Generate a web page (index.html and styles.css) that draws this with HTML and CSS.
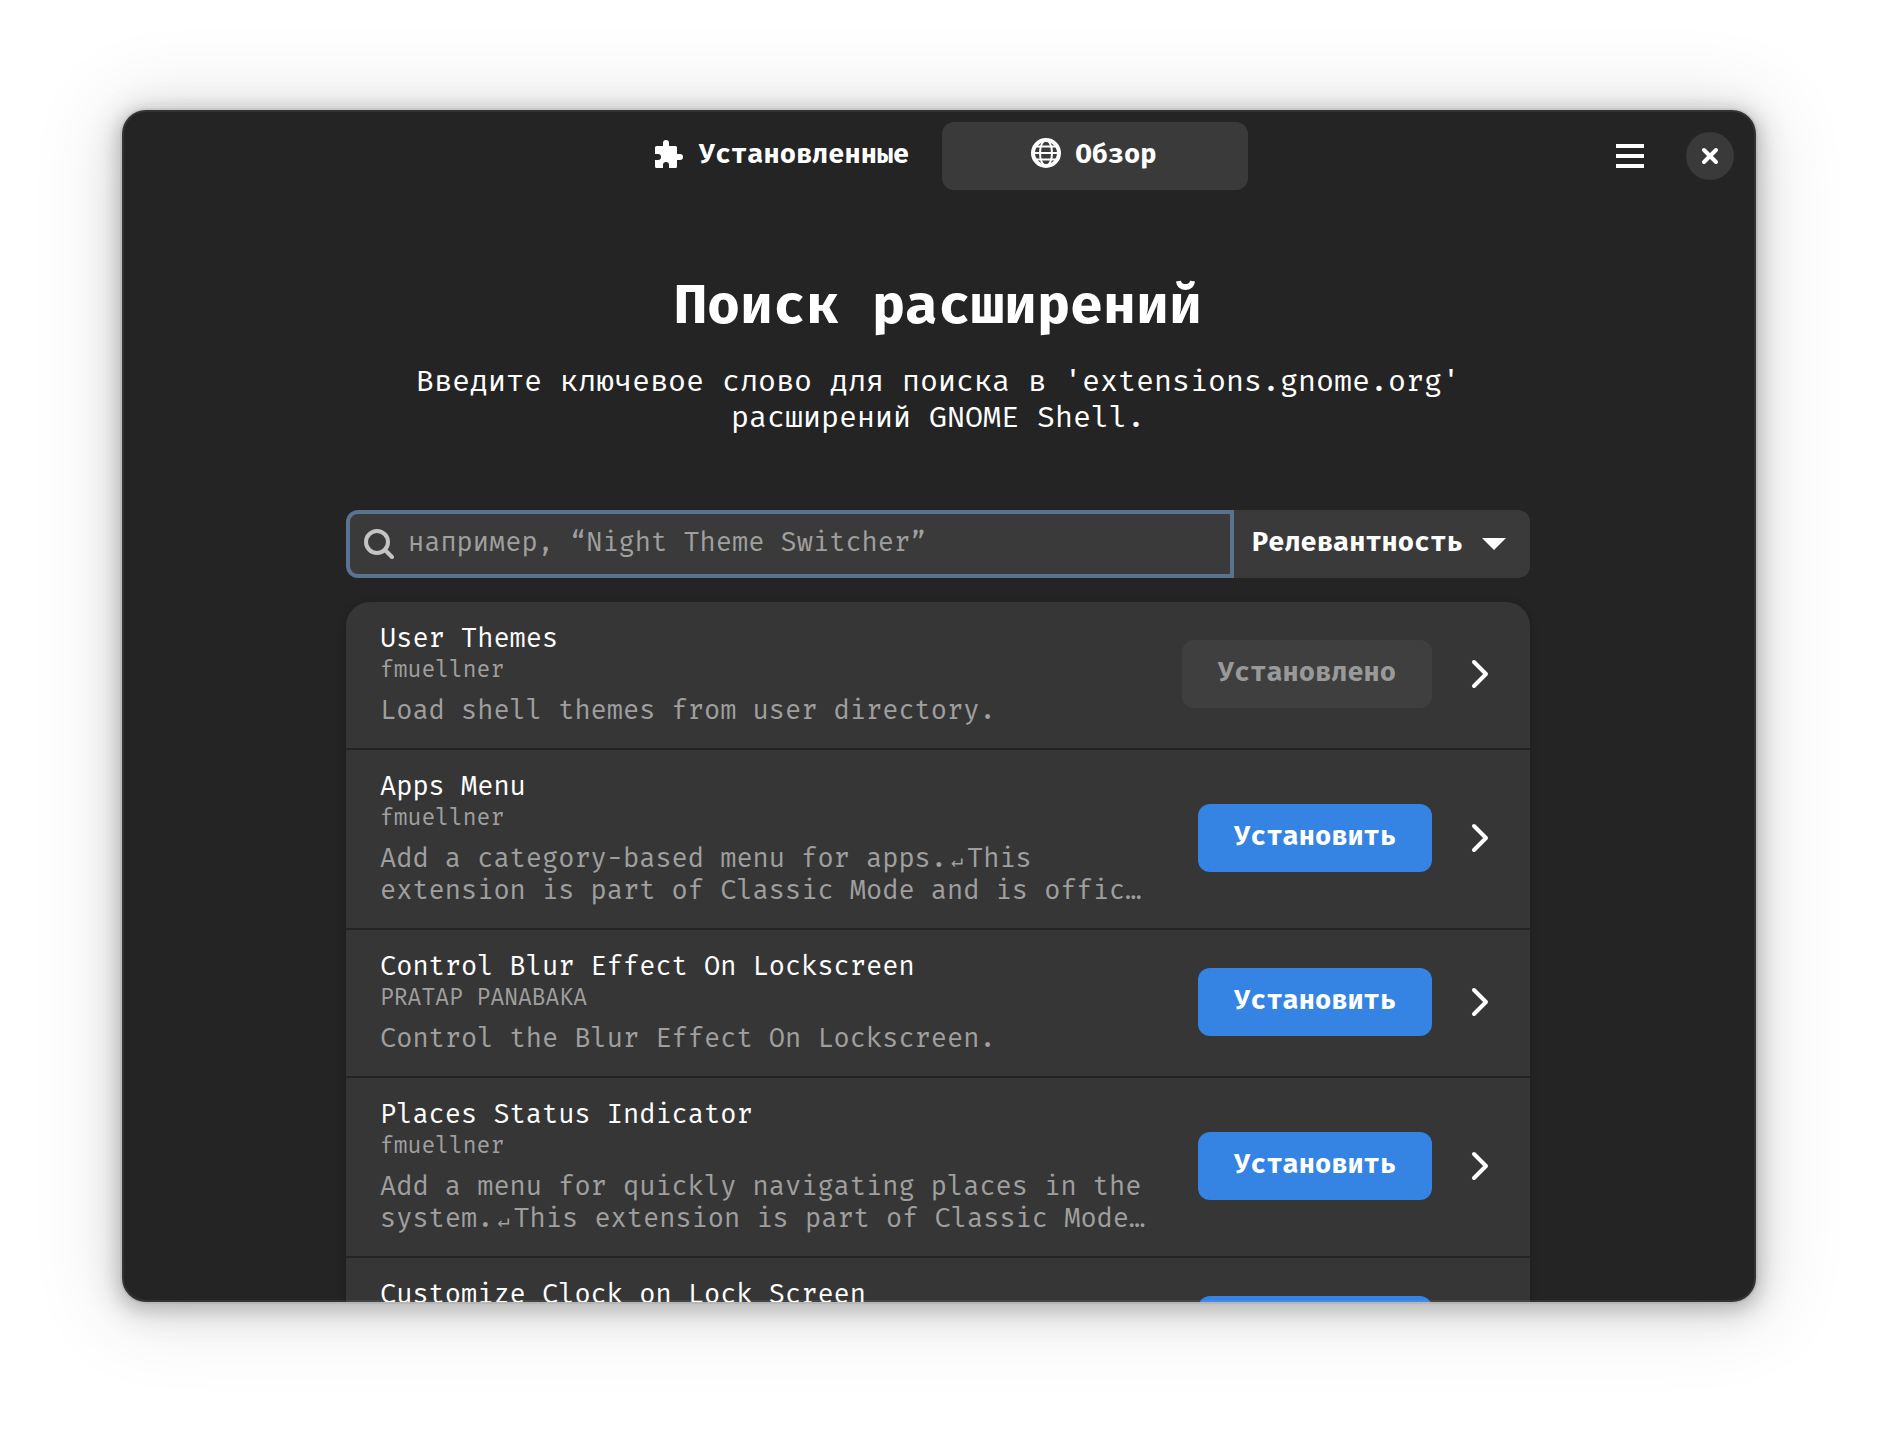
FILE: index.html
```html
<!DOCTYPE html>
<html lang="ru">
<head>
<meta charset="utf-8">
<meta name="viewport" content="width=device-width, initial-scale=1">
<title>Поиск расширений</title>
<link rel="stylesheet" href="styles.css">
</head>
<body>
<svg class="symbols" aria-hidden="true">
  <symbol id="chevron" viewBox="0 0 32 32"><path d="M10 4l12 12-12 12"/></symbol>
</svg>
<div class="window">
  <header class="headerbar">
    <nav class="tabs">
      <button class="tab" type="button">
        <svg class="icon" viewBox="0 0 32 32" aria-hidden="true"><path fill="#fff" d="M2 9.500a1.500 1.500 0 0 1 1.500-1.500H10V5a3 3 0 0 1 6 0v3h6.500a1.500 1.500 0 0 1 1.500 1.500V16h3a3 3 0 0 1 0 6h-3v6.500a1.500 1.500 0 0 1-1.500 1.500H16v-3a3 3 0 0 0-6 0v3H3.500A1.500 1.500 0 0 1 2 28.500V22h3a3 3 0 0 0 0-6H2z"/></svg>
        <span>Установленные</span>
      </button>
      <button class="tab tab-active" type="button">
        <svg class="icon" viewBox="0 0 32 32" aria-hidden="true"><g fill="none" stroke="#fff"><circle cx="16" cy="15" r="13" stroke-width="4"/><ellipse cx="16" cy="15" rx="6" ry="13" stroke-width="2"/><path stroke-width="2" d="M5 8.500h22M3 15h26M5 21.500h22"/></g></svg>
        <span>Обзор</span>
      </button>
    </nav>
    <div class="controls">
      <button class="menu-button" type="button" aria-label="Меню">
        <svg class="icon" viewBox="0 0 32 32" aria-hidden="true"><path fill="#fff" d="M2 4h28v4H2zM2 14h28v4H2zM2 24h28v4H2z"/></svg>
      </button>
      <button class="close-button" type="button" aria-label="Закрыть">
        <svg class="icon" viewBox="0 0 32 32" aria-hidden="true"><path fill="none" stroke="#fff" stroke-width="4" stroke-linecap="round" d="M10 10l12 12M22 10L10 22"/></svg>
      </button>
    </div>
  </header>
  <main class="content">
    <div class="column">
      <h1 class="title">Поиск расширений</h1>
      <p class="subtitle">Введите ключевое слово для поиска в 'extensions.gnome.org' расширений GNOME Shell.</p>
      <form class="search">
        <label class="search-field">
          <svg class="icon" viewBox="0 0 32 32" aria-hidden="true"><g fill="none" stroke="#c4c4c4" stroke-width="4" stroke-linecap="round"><circle cx="15" cy="14" r="11"/><path d="M23 22l7 7"/></g></svg>
          <input class="search-input" type="text" aria-label="Поиск расширений" placeholder="например, “Night Theme Switcher”">
        </label>
        <div class="sort">
          <select class="sort-select" aria-label="Сортировка"><option>Релевантность</option></select>
          <svg class="sort-arrow" viewBox="0 0 24 12" aria-hidden="true"><path fill="#fff" d="M0 0h24L12 12z"/></svg>
        </div>
      </form>
      <ul class="list">
        <li class="row">
          <div class="info">
            <h2 class="name">User Themes</h2>
            <p class="author">fmuellner</p>
            <p class="desc">Load shell themes from user directory.</p>
          </div>
          <button class="install" type="button" disabled>Установлено</button>
          <button class="more" type="button" aria-label="Подробнее"><svg class="icon chevron" aria-hidden="true"><use href="#chevron"/></svg></button>
        </li>
        <li class="row">
          <div class="info">
            <h2 class="name">Apps Menu</h2>
            <p class="author">fmuellner</p>
            <p class="desc">Add a category-based menu for apps.<span class="return">↵</span>This extension is part of Classic Mode and is offic…</p>
          </div>
          <button class="install" type="button">Установить</button>
          <button class="more" type="button" aria-label="Подробнее"><svg class="icon chevron" aria-hidden="true"><use href="#chevron"/></svg></button>
        </li>
        <li class="row">
          <div class="info">
            <h2 class="name">Control Blur Effect On Lockscreen</h2>
            <p class="author">PRATAP PANABAKA</p>
            <p class="desc">Control the Blur Effect On Lockscreen.</p>
          </div>
          <button class="install" type="button">Установить</button>
          <button class="more" type="button" aria-label="Подробнее"><svg class="icon chevron" aria-hidden="true"><use href="#chevron"/></svg></button>
        </li>
        <li class="row">
          <div class="info">
            <h2 class="name">Places Status Indicator</h2>
            <p class="author">fmuellner</p>
            <p class="desc">Add a menu for quickly navigating places in the system.<span class="return">↵</span>This extension is part of Classic Mode…</p>
          </div>
          <button class="install" type="button">Установить</button>
          <button class="more" type="button" aria-label="Подробнее"><svg class="icon chevron" aria-hidden="true"><use href="#chevron"/></svg></button>
        </li>
        <li class="row">
          <div class="info">
            <h2 class="name">Customize Clock on Lock Screen</h2>
            <p class="author">PRATAP PANABAKA</p>
            <p class="desc">Customize Clock on Lock Screen.</p>
          </div>
          <button class="install" type="button">Установить</button>
          <button class="more" type="button" aria-label="Подробнее"><svg class="icon chevron" aria-hidden="true"><use href="#chevron"/></svg></button>
        </li>
      </ul>
    </div>
  </main>
</div>
</body>
</html>
```
FILE: styles.css
```css
* { box-sizing: border-box; }

body {
  margin: 0;
  height: 100vh;
  padding: 110px 122px 134px;
  background: #fff;
  color: #fff;
  font: 27px/32px "Fira Mono", "Liberation Mono", monospace;
}

h1, h2, p, ul { margin: 0; padding: 0; }

button, input, select {
  font: inherit;
  color: inherit;
  border: 0;
  margin: 0;
  padding: 0;
  background: none;
}

.symbols { position: absolute; width: 0; height: 0; }

.icon { display: block; flex: none; width: 32px; height: 32px; }

.window {
  position: relative;
  display: flex;
  flex-direction: column;
  height: 100%;
  border-radius: 24px;
  background: #242424;
  box-shadow:
    0 0 0 2px rgba(0, 0, 0, .05),
    0 4px 16px 4px rgba(0, 0, 0, .14),
    0 6px 28px 10px rgba(0, 0, 0, .1),
    0 4px 80px 16px rgba(0, 0, 0, .1);
}

/* light inner outline, above the scrolled content */
.window::after {
  content: "";
  position: absolute;
  inset: 0;
  border: 2px solid rgba(255, 255, 255, .07);
  border-radius: inherit;
  pointer-events: none;
}

.headerbar {
  display: grid;
  grid-template-columns: 1fr auto 1fr;
  align-items: center;
  padding: 12px 22px;
}

.tabs { grid-column: 2; display: flex; gap: 6px; }

.tab {
  display: flex;
  align-items: center;
  justify-content: center;
  gap: 14px;
  width: 306px;
  height: 68px;
  padding: 0 4px 4px 0;
  border-radius: 12px;
  font-weight: 700;
}

.tab-active { background: #3a3a3a; }

.controls {
  display: flex;
  align-items: center;
  justify-content: flex-end;
  gap: 40px;
}

.close-button {
  display: grid;
  place-items: center;
  width: 48px;
  height: 48px;
  border-radius: 50%;
  background: #3a3a3a;
}

.content {
  flex: 1;
  min-height: 0;
  padding-right: 2px;
  overflow: hidden;
  border-radius: 0 0 24px 24px;
}

.column {
  max-width: 1184px;
  margin: 0 auto;
  padding-top: 71px;
}

.title { font-size: 55px; line-height: 64px; text-align: center; }

.subtitle {
  margin: 26px 0 75px;
  font-size: 30px;
  line-height: 36px;
  text-align: center;
}

.search { display: flex; height: 68px; margin-bottom: 24px; }

.search-field {
  flex: 1;
  display: flex;
  align-items: center;
  gap: 14px;
  padding: 0 12px;
  border: 4px solid #597493;
  border-radius: 12px 0 0 12px;
  background: #3a3a3a;
}

.search-input { flex: 1; min-width: 0; height: 60px; padding-bottom: 4px; outline: 0; }
.search-input::placeholder { color: #9f9f9f; opacity: 1; }

.sort {
  flex: none;
  display: grid;
  align-items: center;
  width: 296px;
  border-radius: 0 12px 12px 0;
  background: #3a3a3a;
}

.sort-select {
  grid-area: 1 / 1;
  height: 68px;
  padding: 0 60px 4px 18px;
  appearance: none;
  font-weight: 700;
}

.sort-arrow {
  grid-area: 1 / 1;
  justify-self: end;
  width: 24px;
  height: 12px;
  margin-right: 24px;
  pointer-events: none;
}

.list {
  list-style: none;
  border-radius: 24px;
  background: #363636;
  box-shadow: 0 2px 6px 2px rgba(0, 0, 0, .14);
}

.row {
  display: flex;
  align-items: center;
  gap: 32px;
  padding: 20px 34px 22px;
}

.row + .row { border-top: 2px solid #242424; }

.info { flex: 1; min-width: 0; }

.name { font-size: 27px; font-weight: 400; }

.author {
  margin-bottom: 10px;
  font-size: 23px;
  line-height: 30px;
  color: #9f9f9f;
}

.desc { max-width: 786px; color: #9f9f9f; }

.return {
  display: inline-block;
  width: 20px;
  font-size: 20px;
  line-height: 20px;
  text-align: center;
}

.install {
  flex: none;
  height: 68px;
  padding: 0 36px 4px;
  border-radius: 12px;
  background: #3584e4;
  font-weight: 700;
}

.install:disabled { background: #3f3f3f; color: #999; }

.chevron {
  fill: none;
  stroke: #fff;
  stroke-width: 4;
  stroke-linecap: round;
  stroke-linejoin: round;
}
```
